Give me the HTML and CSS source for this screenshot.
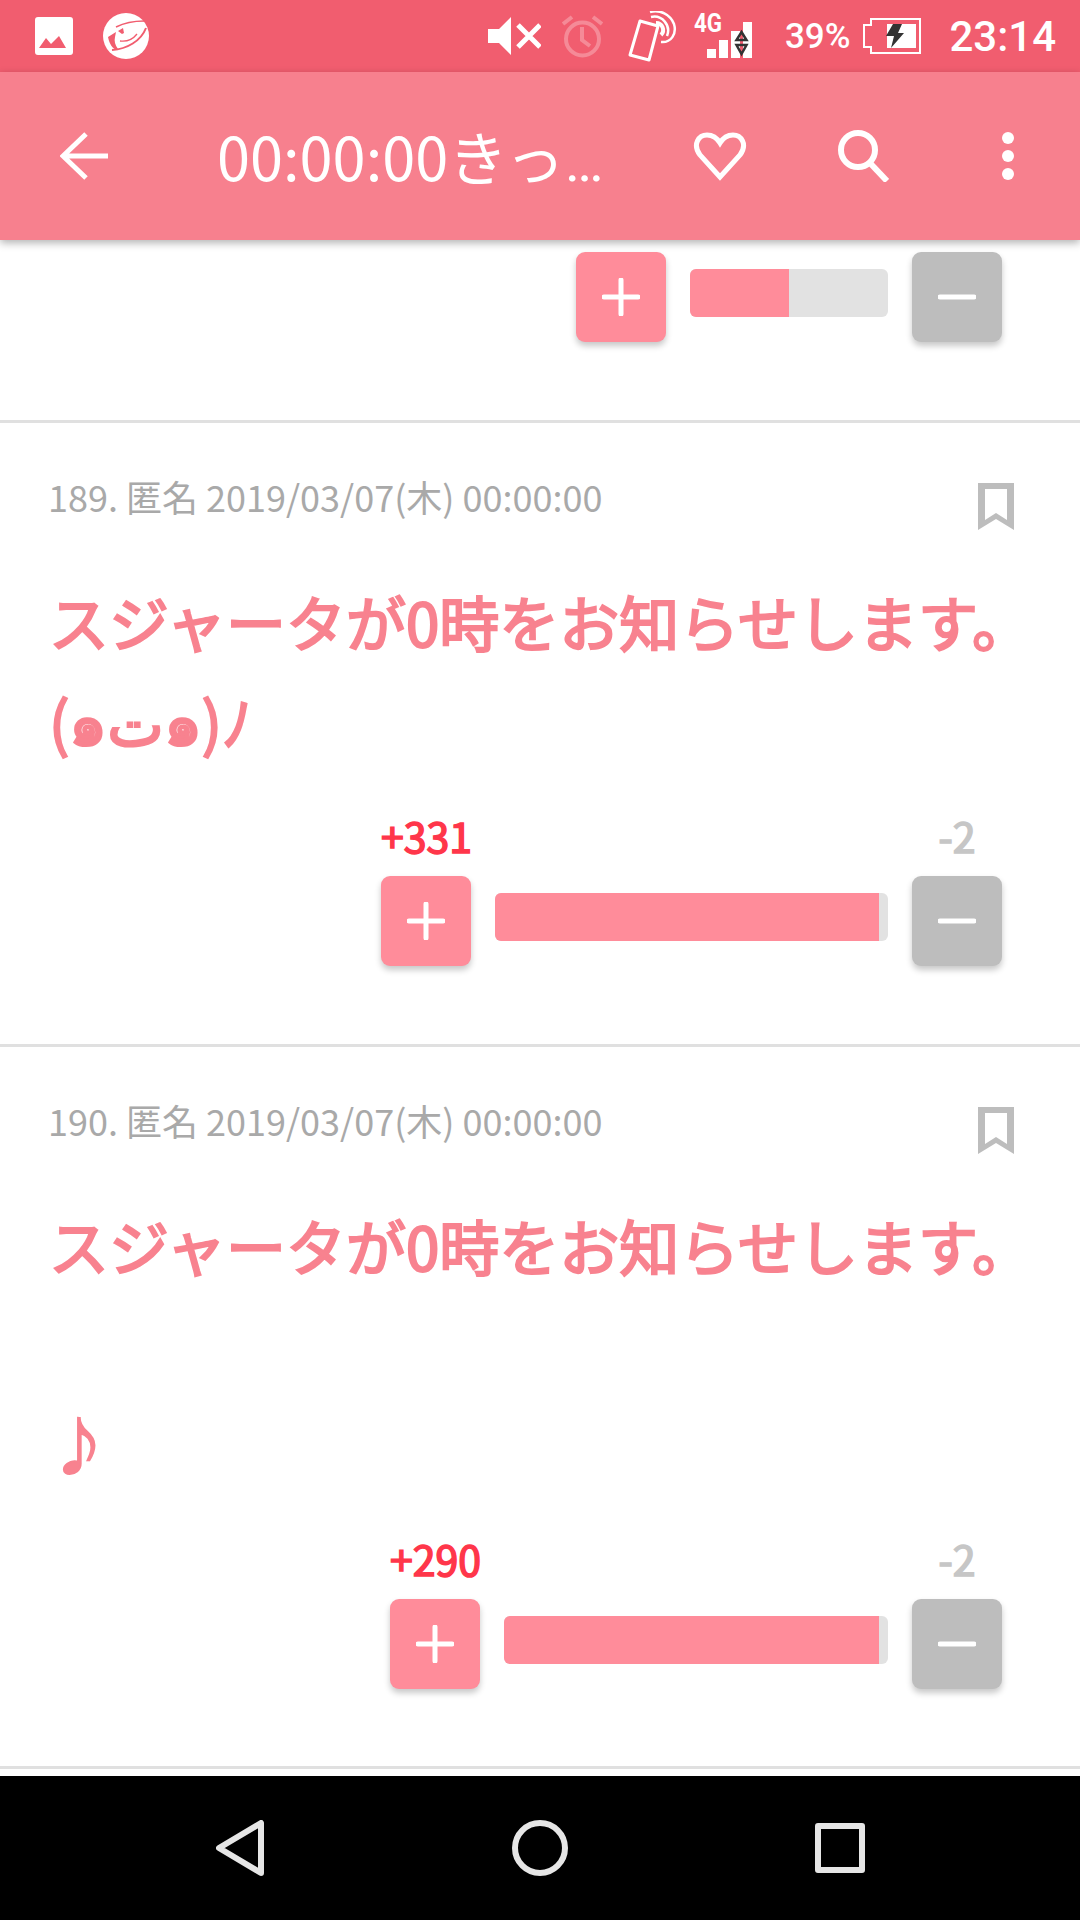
FILE: index.html
```html
<!DOCTYPE html>
<html lang="ja">
<head>
  <meta charset="UTF-8">
  <title>00:00:00きっかり</title>
  <link rel="stylesheet" href="styles.css">
</head>
<body>

  <div class="statusBar">
    <div class="statusLeft">
      <svg class="icoPicture" viewBox="0 0 38 38"><path fill="#fff" fill-rule="evenodd" d="M3 0h32a3 3 0 0 1 3 3v32a3 3 0 0 1-3 3H3a3 3 0 0 1-3-3V3a3 3 0 0 1 3-3zM4 31h27L24 19l-8 8-5-6z"/></svg>
      <svg class="icoTrend" viewBox="0 0 46 46">
        <circle cx="23" cy="23" r="23" fill="#fff"/>
        <g fill="none" stroke="#f15d6f">
          <path stroke-width="1.500" d="M13 14C21 10 30 8 41 8"/>
          <path stroke-width="2" d="M43 15C38 28 24 36 9 37"/>
          <path stroke-width="1.300" d="M17 28c7 1 13-2 17-7"/>
        </g>
        <path fill="#f15d6f" d="M5 24l8-5-1 5c-1 4 0 8 3 12l-2 1C8 34 6 29 5 24zM15 18l5-3 1 5-2 1z"/>
      </svg>
    </div>
    <div class="statusRight">
      <svg class="icoMute" viewBox="0 0 53 38"><path fill="#fff" d="M0 12h11L23 0v38L11 26H0z"/><path stroke="#fff" stroke-width="5" d="M30 8l22 22M52 8L30 30"/></svg>
      <svg class="icoAlarm" viewBox="0 0 41 43" fill="none" stroke="#fff" stroke-opacity=".28" stroke-width="4"><circle cx="20.500" cy="24" r="16.500"/><path d="M20 12v13l8 6M1 9l9-7M40 9l-9-7"/></svg>
      <svg class="icoPhone" viewBox="0 0 51 51" fill="none" stroke="#fff">
        <path stroke-width="3" stroke-linejoin="round" d="M13 10l18 5-9 34-19-5z"/>
        <path stroke-width="2.500" d="M24 6a14 14 0 0 1 16 19M23 1a20 20 0 0 1 24 12c3 10-3 19-13 18"/>
        <path stroke-width="4" d="M29 12a7 7 0 0 1 5 12"/>
      </svg>
      <div class="signal">
        <span class="netType">4G</span>
        <svg class="icoSignal" viewBox="0 0 45 36">
          <path fill="#fff" d="M0 27h9v9H0zM12 18h9v18h-9zM24 9h9v27h-9zM36 0h9v36h-9z"/>
          <path fill="none" stroke="#333" stroke-width="2.500" d="M34.500 10l5 8h-10zM29.500 23h10l-5 9z"/>
        </svg>
      </div>
      <span class="battPct">39%</span>
      <svg class="icoBattery" viewBox="0 0 58 36">
        <path fill="none" stroke="#fff" stroke-width="2" d="M57 1H8v6H1v22h7v6h49z"/>
        <path fill="#fff" d="M24 6h29v24H24z"/>
        <path fill="#333" d="M30 6h9l-4 9h6L28 30l3-12h-8z"/>
      </svg>
      <span class="clock">23:14</span>
    </div>
  </div>

  <div class="appBar">
    <svg class="icoBack" viewBox="0 0 48 48" fill="none" stroke="#fff" stroke-width="5"><path d="M48 24H3M26 2L3 24l23 22"/></svg>
    <div class="barTitle">00:00:00きっ<span class="dots">…</span></div>
    <svg class="icoHeart" viewBox="0 0 54 49" fill="none" stroke="#fff" stroke-width="5"><path d="M27 45L7 23C-1 12 6 3 14 3c6 0 10 3 13 8 3-5 7-8 13-8 8 0 15 9 7 20z"/></svg>
    <svg class="icoSearch" viewBox="0 0 51 52" fill="none" stroke="#fff" stroke-width="6"><circle cx="20" cy="20" r="17"/><path d="M32 33l17 18"/></svg>
    <svg class="icoMore" viewBox="0 0 12 48" fill="#fff"><circle cx="6" cy="6" r="6"/><circle cx="6" cy="24" r="6"/><circle cx="6" cy="42" r="6"/></svg>
  </div>

  <div class="thread">

    <div class="post postCut">
      <div class="votes">
        <div class="voteCol">
          <div class="voteBtn plus"><svg viewBox="0 0 38 38"><path d="M19 2v34M2 19h34"/></svg></div>
        </div>
        <div class="ratio" style="width: 198px"><div class="ratioFill" style="width: 99px"></div></div>
        <div class="voteCol">
          <div class="voteBtn minus"><svg viewBox="0 0 38 38"><path d="M2 19h34"/></svg></div>
        </div>
      </div>
    </div>

    <div class="post">
      <div class="postMeta">
        <span>189. 匿名 2019/03/07(木) 00:00:00</span>
        <svg class="icoMark" viewBox="0 0 36 47"><path fill="#bdbdbd" fill-rule="evenodd" d="M0 0h36v47L18 36 0 47zM7 6v31l11-7 11 7V6z"/></svg>
      </div>
      <div class="postBody">スジャータが0時をお知らせします。<br>(๑ت๑)ﾉ</div>
      <div class="votes">
        <div class="voteCol">
          <div class="count good">+331</div>
          <div class="voteBtn plus"><svg viewBox="0 0 38 38"><path d="M19 2v34M2 19h34"/></svg></div>
        </div>
        <div class="ratio withCount" style="width: 393px"><div class="ratioFill" style="width: 384px"></div></div>
        <div class="voteCol">
          <div class="count bad">-2</div>
          <div class="voteBtn minus"><svg viewBox="0 0 38 38"><path d="M2 19h34"/></svg></div>
        </div>
      </div>
    </div>

    <div class="post">
      <div class="postMeta">
        <span>190. 匿名 2019/03/07(木) 00:00:00</span>
        <svg class="icoMark" viewBox="0 0 36 47"><path fill="#bdbdbd" fill-rule="evenodd" d="M0 0h36v47L18 36 0 47zM7 6v31l11-7 11 7V6z"/></svg>
      </div>
      <div class="postBody">スジャータが0時をお知らせします。<br><br>♪</div>
      <div class="votes">
        <div class="voteCol">
          <div class="count good">+290</div>
          <div class="voteBtn plus"><svg viewBox="0 0 38 38"><path d="M19 2v34M2 19h34"/></svg></div>
        </div>
        <div class="ratio withCount" style="width: 384px"><div class="ratioFill" style="width: 375px"></div></div>
        <div class="voteCol">
          <div class="count bad">-2</div>
          <div class="voteBtn minus"><svg viewBox="0 0 38 38"><path d="M2 19h34"/></svg></div>
        </div>
      </div>
    </div>

  </div>

  <div class="navBar">
    <svg class="icoNavBack" viewBox="0 0 48 56" fill="none" stroke="#e6e6e6" stroke-width="6" stroke-linejoin="round"><path d="M45 3v50L3 28z"/></svg>
    <svg class="icoNavHome" viewBox="0 0 56 56" fill="none" stroke="#e6e6e6" stroke-width="6"><circle cx="28" cy="28" r="25"/></svg>
    <svg class="icoNavRecent" viewBox="0 0 50 50" fill="none" stroke="#e6e6e6" stroke-width="6" stroke-linejoin="round"><path d="M3 3h44v44H3z"/></svg>
  </div>

</body>
</html>
```

FILE: styles.css
```css
* { box-sizing: border-box; }
body {
  margin: 0;
  width: 1080px;
  height: 1920px;
  display: flex;
  flex-direction: column;
  overflow: hidden;
  background: #fff;
  font-family: 'Noto Sans CJK JP', 'Noto Sans', 'DejaVu Sans', sans-serif;
}
svg { display: block; flex: none; }

/* status bar */
.statusBar {
  height: 72px;
  flex: none;
  display: flex;
  justify-content: space-between;
  align-items: center;
  padding: 0 24px 0 35px;
  background: #f15d6f;
  color: #fff;
  font-family: Roboto, sans-serif;
  font-weight: 500;
}
.statusLeft, .statusRight {
  display: flex;
  align-items: center;
}
.icoPicture { width: 38px; height: 38px; margin-right: 30px; }
.icoTrend { width: 46px; height: 46px; }
.icoMute { width: 53px; height: 38px; margin-right: 21px; }
.icoAlarm { width: 41px; height: 43px; margin-right: 24px; }
.icoPhone { width: 51px; height: 51px; margin-right: 16px; }
.signal {
  position: relative;
  width: 58px;
  height: 40px;
  margin-right: 33px;
}
.netType {
  position: absolute;
  left: 0;
  top: -7px;
  font-size: 26px;
  font-weight: 700;
  line-height: 28px;
  transform: scaleX(0.86);
  transform-origin: left;
}
.icoSignal { position: absolute; right: 0; bottom: -2px; width: 45px; height: 36px; }
.battPct { font-size: 35px; margin-right: 13px; }
.icoBattery { width: 58px; height: 36px; margin-right: 28px; }
.clock { font-size: 42px; }

/* app bar */
.appBar {
  height: 168px;
  flex: none;
  display: flex;
  align-items: center;
  padding-left: 60px;
  background: #f7808e;
  color: #fff;
  box-shadow: 0 3px 8px rgba(0, 0, 0, 0.3);
  position: relative;
  z-index: 2;
}
.icoBack { width: 48px; height: 48px; }
.barTitle {
  width: 476px;
  margin-left: 109px;
  padding-top: 4px;
  font-size: 59.5px;
  line-height: 80px;
  white-space: nowrap;
}
.dots {
  font-family: Roboto, sans-serif;
  font-size: 58px;
}
.icoHeart { width: 54px; height: 49px; }
.icoSearch { width: 51px; height: 52px; margin-left: 91px; }
.icoMore { width: 12px; height: 48px; margin-left: 113px; }

/* posts */
.post {
  padding: 49px 30px 78px 48px;
  border-bottom: 3px solid #e0e0e0;
}
.post:last-child { padding-bottom: 77px; }
.postCut {
  height: 183px;
  padding-top: 12px;
}
.thread {
  flex: 1;
  overflow: hidden;
}
.postMeta {
  display: flex;
  justify-content: space-between;
  height: 48px;
  font-size: 36px;
  line-height: 48px;
  color: #a9a9a9;
}
.icoMark { width: 36px; height: 47px; margin: 11px 36px 0 0; }
.postBody {
  margin-top: 51px;
  padding-left: 1px;
  font-size: 60px;
  line-height: 99px;
  color: #f8828f;
  -webkit-text-stroke: 2.2px #f8828f;
}
.votes {
  display: flex;
  justify-content: flex-end;
  gap: 24px;
  margin-top: 43px;
  padding-right: 48px;
}
.postCut .votes { margin-top: 0; }
.voteCol { width: 90px; }
.count {
  height: 47px;
  margin-bottom: 17px;
  font-size: 41px;
  line-height: 47px;
  -webkit-text-stroke: 1.6px;
  text-align: center;
  white-space: nowrap;
}
.count.good { color: #ff364a; }
.count.bad { color: #c6c6c6; }
.voteBtn {
  width: 90px;
  height: 90px;
  display: flex;
  align-items: center;
  justify-content: center;
  border-radius: 9px;
  box-shadow: 0 4px 6px rgba(0, 0, 0, 0.22);
}
.voteBtn.plus { background: #ff8c9a; }
.voteBtn.minus { background: #bdbdbd; }
.voteBtn svg {
  width: 38px;
  height: 38px;
  fill: none;
  stroke: #fff;
  stroke-width: 5;
  stroke-linecap: round;
}
.ratio {
  height: 48px;
  margin-top: 17px;
  border-radius: 6px;
  background: #e2e2e2;
  overflow: hidden;
}
.ratio.withCount { margin-top: 81px; }
.ratioFill {
  height: 100%;
  background: #ff8c9a;
}

/* nav bar */
.navBar {
  height: 144px;
  flex: none;
  display: flex;
  align-items: center;
  padding-left: 216px;
  background: #000;
}
.icoNavBack { width: 48px; height: 56px; }
.icoNavHome { width: 56px; height: 56px; margin-left: 248px; }
.icoNavRecent { width: 50px; height: 50px; margin-left: 247px; }
```
